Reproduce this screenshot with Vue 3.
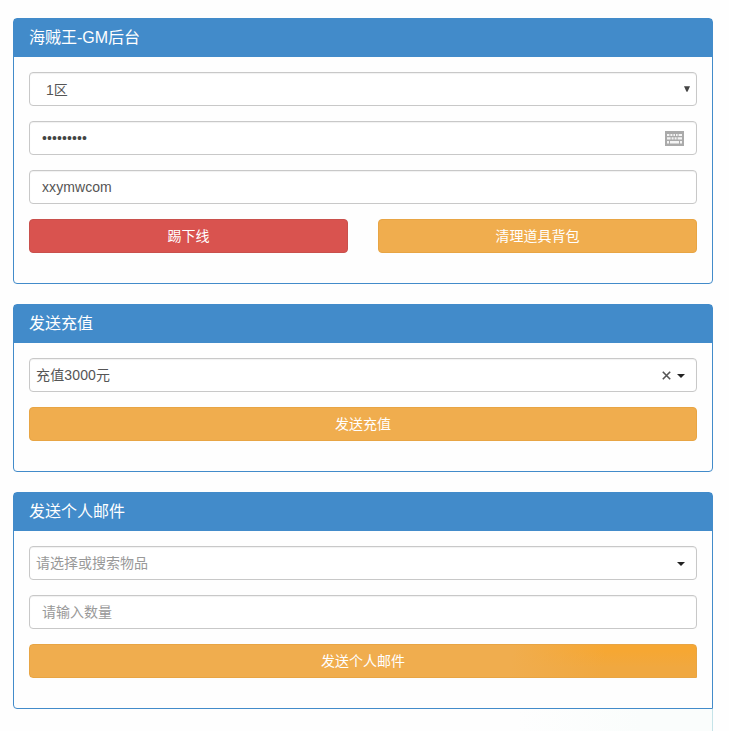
<script setup>
const password = '•••••••••'
</script>

<template>
  <main class="page">
    <section class="panel">
      <h3 class="heading">海贼王-GM后台</h3>
      <div class="body">
        <div class="control zone">
          <span>1区</span>
          <svg class="native-arrow" width="6" height="6" viewBox="0 0 6 6"><path d="M0 .3h6L3.5 5.7h-1z" fill="#444" /></svg>
        </div>
        <div class="control">
          <span class="dots">{{ password }}</span>
          <svg class="keyboard" width="19" height="15" viewBox="0 0 19 15">
            <path d="M0 0h19v15H0z" fill="#aaa" />
            <path d="M2 3h2.4v2H2zM5.4 3h2v2h-2zM8.4 3h1.6v2H8.4zM11 3h1.6v2H11zM13.6 3H17v2h-3.4zM2 6.2h3.6v2.2H2zM6.6 6.2h2v2.2h-2zM9.6 6.2h2v2.2h-2zM12.6 6.2H17v2.2h-4.4zM2 10h2v2.5H2zM5 10h9v2.5H5zM15 10h2v2.5h-2z" fill="#f4f4f4" />
          </svg>
        </div>
        <div class="control"><span class="account">xxymwcom</span></div>
        <div class="row">
          <button class="btn danger">踢下线</button>
          <button class="btn warning">清理道具背包</button>
        </div>
      </div>
    </section>

    <section class="panel">
      <h3 class="heading">发送充值</h3>
      <div class="body">
        <div class="control combo">
          <span class="amount">充值3000元</span>
          <svg class="clear" width="9" height="9" viewBox="0 0 9 9"><path d="M.8.8l7.4 7.4M8.2.8L.8 8.2" stroke="#555" stroke-width="1.6" /></svg>
          <i class="caret"></i>
        </div>
        <button class="btn warning">发送充值</button>
      </div>
    </section>

    <section class="panel last">
      <h3 class="heading">发送个人邮件</h3>
      <div class="body">
        <div class="control combo muted">
          <span>请选择或搜索物品</span>
          <i class="caret"></i>
        </div>
        <div class="control muted"><span>请输入数量</span></div>
        <button class="btn warning shaded">发送个人邮件</button>
      </div>
    </section>
    <div class="tail"></div>
  </main>
</template>

<style>
body {
  background: #fefefe;
  overflow: hidden;
}
</style>

<style scoped>
.page {
  box-sizing: border-box;
  width: 729px;
  height: 731px;
  padding: 18px 16px 0 13px;
  overflow: hidden;
  font: 14px/20px "Liberation Sans", "Noto Sans CJK SC", sans-serif;
  color: #555;
}
.panel {
  box-sizing: border-box;
  margin-bottom: 20px;
  border: 1px solid #428bca;
  border-radius: 4px;
  background: #fefefe;
}
.last {
  margin-bottom: 0;
  border-bottom-right-radius: 0;
}
.heading {
  box-sizing: border-box;
  height: 38px;
  margin: 0;
  padding: 10px 15px;
  background: #428bca;
  color: #fff;
  font-size: 16px;
  font-weight: 400;
  line-height: 18px;
}
.body {
  display: flex;
  flex-direction: column;
  gap: 15px;
  padding: 15px 15px 30px;
}
.control {
  box-sizing: border-box;
  display: flex;
  align-items: center;
  height: 34px;
  padding: 0 12px;
  border: 1px solid #c8c8c8;
  border-radius: 4px;
  background: #fff;
  box-shadow: inset 0 1px 1px rgba(0, 0, 0, 0.06);
}
.control span {
  flex: 1;
}
.zone {
  padding: 2px 6px 0 16px;
}
.native-arrow {
  margin-bottom: 3px;
}
.dots {
  letter-spacing: 0.1px;
  color: #444;
}
.account {
  letter-spacing: 0.08px;
}
.combo {
  padding: 0 11px 0 6px;
}
.amount {
  letter-spacing: 0.15px;
}
.muted {
  color: #999;
}
.clear {
  margin: 1px 6px 0 0;
}
.caret {
  margin-top: 2px;
  border: 4px solid transparent;
  border-top-color: #222;
  border-bottom: 0;
}
.row {
  display: grid;
  grid-template-columns: 1fr 1fr;
  gap: 30px;
}
.btn {
  box-sizing: border-box;
  width: 100%;
  height: 34px;
  padding: 0 12px;
  border: 1px solid #e8a544;
  border-radius: 4px;
  background: #f0ad4e;
  color: #fff;
  font: inherit;
}
.danger {
  border-color: #c9504c;
  background: #d9534f;
}
.shaded {
  border-bottom-right-radius: 0;
  background:
    linear-gradient(100deg, #f0ad4e 72%, rgba(240, 173, 78, 0) 86%),
    linear-gradient(180deg, #f6a733 20%, #f0a840 70%);
}
.tail {
  width: 699px;
  height: 22px;
  border-right: 1px solid #c5e3e8;
  background: linear-gradient(90deg, transparent 72%, #fafdfc 90%);
}
</style>
